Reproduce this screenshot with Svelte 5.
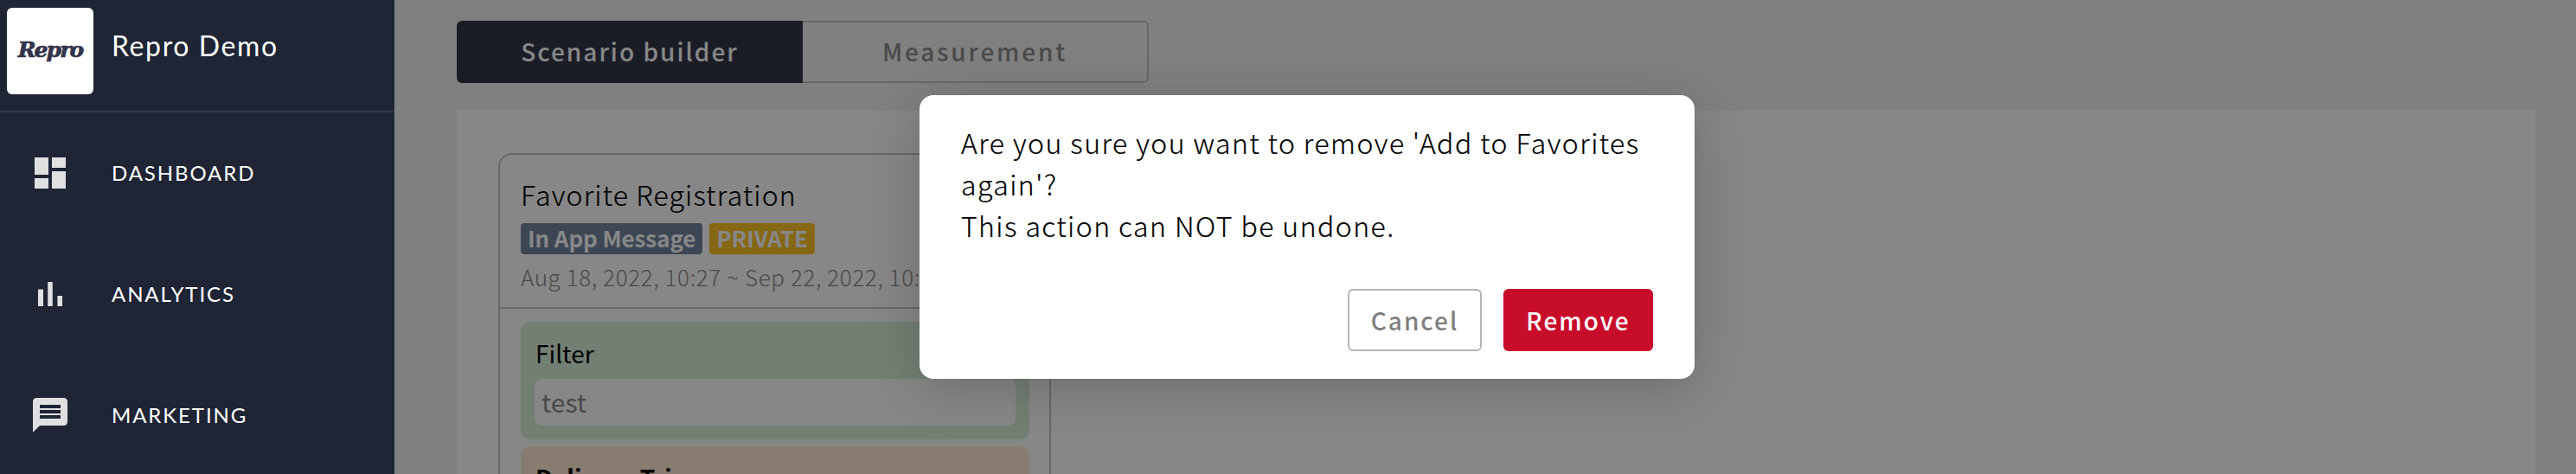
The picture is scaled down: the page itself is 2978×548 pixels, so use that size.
<script>
  const nav = [
    { label: 'DASHBOARD', d: 'M3 13h8V3H3v10zm0 8h8v-6H3v6zm10 0h8V11h-8v10zm0-18v6h8V3h-8z' },
    { label: 'ANALYTICS', d: 'M5 9.2h3V19H5zM10.6 5h2.8v14h-2.8zm5.6 8H19v6h-2.8z' },
    { label: 'MARKETING', d: 'M20 2H4c-1.1 0-1.99.9-1.99 2L2 22l4-4h14c1.1 0 2-.9 2-2V4c0-1.1-.9-2-2-2zm-2 12H6v-2h12v2zm0-3H6V9h12v2zm0-3H6V6h12v2z' }
  ];
</script>

<div class="root">
  <aside class="side">
    <header class="brand">
      <div class="logo"><span>Repro</span></div>
      <div class="name">Repro Demo</div>
    </header>
    <nav class="nav">
      {#each nav as item}
        <div class="item">
          <svg viewBox="0 0 24 24" width="48" height="48" aria-hidden="true"><path d={item.d} /></svg>
          <span>{item.label}</span>
        </div>
      {/each}
    </nav>
  </aside>

  <main class="main">
    <div class="tabs">
      <div class="tab active"><span>Scenario builder</span></div>
      <div class="tab"><span>Measurement</span></div>
    </div>
    <section class="panel">
      <article class="card">
        <div class="head">
          <h2>Favorite Registration</h2>
          <div class="badges">
            <span class="badge blue">In App Message</span>
            <span class="badge gold">PRIVATE</span>
          </div>
          <div class="date">Aug 18, 2022, 10:27 ~ Sep 22, 2022, 10:27</div>
        </div>
        <div class="body">
          <div class="block green">
            <div class="label">Filter</div>
            <div class="value">test</div>
          </div>
          <div class="block orange">
            <div class="label strong">Delivery Trigger</div>
          </div>
        </div>
      </article>
    </section>
    <div class="overlay"></div>
    <div class="modal">
      <p>Are you sure you want to remove 'Add to Favorites again'?<br />This action can NOT be undone.</p>
      <div class="actions">
        <button class="btn cancel">Cancel</button>
        <button class="btn remove">Remove</button>
      </div>
    </div>
  </main>
</div>

<style>
  :global(body) { margin: 0; background: #f1f1f1; }
  .root {
    display: flex;
    height: 548px;
    width: 2978px;
    overflow: hidden;
    font-family: "Noto Sans CJK JP", "Noto Sans", sans-serif;
  }
  .side {
    width: 456px;
    flex: none;
    background: #1f2535;
    color: #fff;
    font-family: Lato, "Noto Sans", sans-serif;
  }
  .brand {
    box-sizing: border-box;
    border-bottom: 2px solid #343848;
    height: 130px;
    display: flex;
    padding: 9px 0 0 8px;
    gap: 21px;
  }
  .logo {
    width: 100px;
    height: 100px;
    border-radius: 6px;
    background: #fff;
    display: flex;
    align-items: center;
    justify-content: center;
  }
  .logo span {
    font-family: "DejaVu Serif", serif;
    font-weight: 700;
    font-style: italic;
    font-size: 25px;
    letter-spacing: -1.9px;
    color: #32344a;
    -webkit-text-stroke: 0.7px #32344a;
    margin-top: -3px;
  }
  .name {
    font-size: 32px;
    line-height: 36px;
    letter-spacing: 1.6px;
    padding-top: 26px;
  }
  .nav { display: flex; flex-direction: column; }
  .item {
    height: 140px;
    display: flex;
    align-items: center;
    padding-left: 34px;
    gap: 47px;
    font-size: 24px;
    letter-spacing: 1.9px;
  }
  .item span { margin-top: -2px; }
  .item svg { fill: #e0e0e0; flex: none; }
  .main {
    position: relative;
    flex: 1;
    background: #f1f1f1;
    padding: 24px 47px 0 72px;
    box-sizing: border-box;
    min-width: 0;
  }
  .tabs { display: flex; height: 72px; }
  .tab {
    width: 400px;
    box-sizing: border-box;
    display: flex;
    align-items: center;
    justify-content: center;
    border: 2px solid #c4c4c4;
    border-left: 0;
    border-radius: 0 6px 6px 0;
    color: #8c8c8c;
    font-size: 28px;
    font-weight: 500;
    letter-spacing: 2.8px;
  }
  .tab span { margin-top: -3px; }
  .tab.active {
    background: #333748;
    border: 0;
    border-radius: 6px 0 0 6px;
    color: #fff;
    letter-spacing: 2px;
  }
  .panel {
    margin-top: 32px;
    background: #fff;
    height: 500px;
    padding: 49px 48px;
  }
  .card {
    width: 639px;
    box-sizing: border-box;
    border: 2px solid #c4c4c4;
    border-radius: 16px;
    height: 500px;
  }
  .head {
    padding: 21px 24px 0;
    height: 178px;
    box-sizing: border-box;
    border-bottom: 2px solid #c4c4c4;
  }
  h2 {
    margin: 0;
    font-size: 32px;
    font-weight: 300;
    line-height: 48px;
    letter-spacing: 1.15px;
    color: #000;
    -webkit-text-stroke: 0.2px #000;
  }
  .badges { display: flex; gap: 8px; margin-top: 10px; }
  .badge {
    height: 36px;
    line-height: 34px;
    padding: 0 8px;
    border-radius: 4px;
    color: #fff;
    font-size: 26px;
    font-weight: 700;
    letter-spacing: -0.1px;
  }
  .blue { background: #73849e; }
  .gold { background: #fdc226; }
  .date { margin-top: 8px; font-size: 26px; font-weight: 300; line-height: 36px; letter-spacing: 0.6px; color: #8c8c8c; white-space: nowrap; }
  .body { padding: 15px 24px; }
  .block { border-radius: 10px; width: 588px; box-sizing: border-box; padding: 16px; margin-bottom: 8px; }
  .green { background: #dbf0db; height: 136px; }
  .orange { background: #ffead1; height: 100px; }
  .label { font-size: 28px; line-height: 40px; color: #000; padding-left: 1px; }
  .strong { font-weight: 700; }
  .value {
    margin-top: 10px;
    height: 54px;
    line-height: 52px;
    background: #fff;
    border-radius: 8px;
    padding-left: 8px;
    font-size: 30px;
    color: #8c8c8c;
  }
  .overlay { position: absolute; inset: 0; background: rgba(0, 0, 0, 0.47); }
  .modal {
    position: absolute;
    left: 607px;
    top: 110px;
    width: 896px;
    height: 328px;
    box-sizing: border-box;
    background: #fff;
    border-radius: 16px;
    padding: 30px 48px;
    box-shadow: 0 10px 60px rgba(0, 0, 0, 0.2);
    color: #000;
  }
  .modal p {
    margin: 0;
    font-size: 32px;
    font-weight: 300;
    line-height: 48px;
    letter-spacing: 1.43px;
    -webkit-text-stroke: 0.2px #000;
  }
  .actions { display: flex; justify-content: flex-end; gap: 25px; margin-top: 50px; }
  .btn {
    height: 72px;
    box-sizing: border-box;
    border-radius: 6px;
    font-family: inherit;
    font-size: 28px;
    font-weight: 500;
    letter-spacing: 2px;
    padding: 0;
  }
  .cancel { width: 155px; background: #fff; border: 2px solid #b5b5b5; color: #7f7f7f; }
  .remove { width: 173px; background: #c80d2b; border: 0; color: #fff; }
</style>
